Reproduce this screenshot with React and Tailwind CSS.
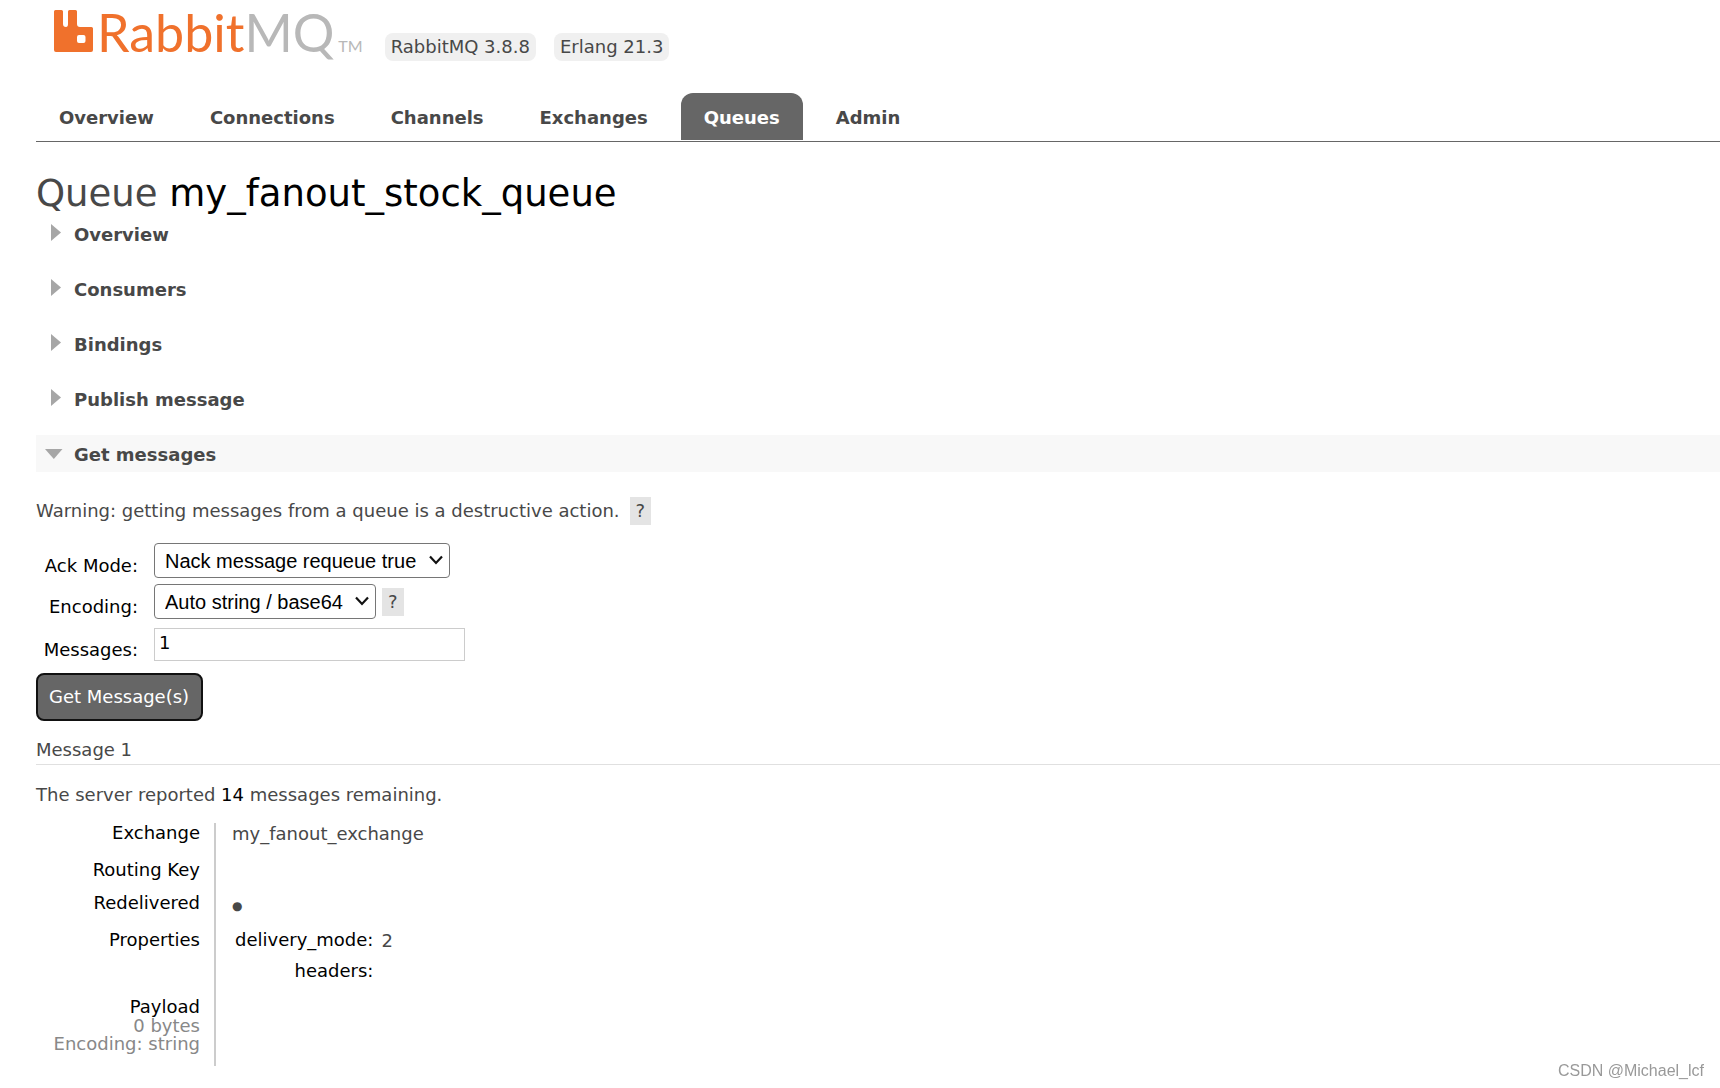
const tabs = ["Overview", "Connections", "Channels", "Exchanges", "Queues", "Admin"];
const closedSections = ["Overview", "Consumers", "Bindings", "Publish message"];

function Logo() {
  return (
    <a href="#/" aria-label="RabbitMQ" className="flex items-end">
      <svg width="39" height="42" viewBox="0 0 39 42" fill="#f0712c" aria-hidden="true">
        <path
          fillRule="evenodd"
          d="M1.5 0H7.5Q9 0 9 1.5V14Q9 17 12 17Q14 17 14 14V1.5Q14 0 15.500 0H21.500Q23 0 23 1.500V14Q23 17 26 17H37.500Q39 17 39 18.500V40Q39 42 37 42H2Q0 42 0 40V1.500Q0 0 1.500 0ZM25 25Q23 25 23 27V31Q23 33 25 33H29.500Q31.500 33 31.500 31V27Q31.500 25 29.500 25Z"
        />
      </svg>
      <span className="ml-1 font-[Lato] text-[52px] leading-[40px] text-[#f0712c]">
        Rabbit<span className="text-[#b8b8b8]">MQ</span>
      </span>
      <span className="ml-1 font-[Lato] text-base leading-3 text-[#b8b8b8]">TM</span>
    </a>
  );
}

function Section({ title, open }) {
  return (
    <h2 className={open ? "bg-[#f8f8f8]" : ""}>
      <button type="button" aria-expanded={!!open} className="flex h-[37px] w-full items-center pl-[9px] font-bold">
        <svg width="18" height="20" viewBox="0 0 18 20" fill="#a6a6a6" aria-hidden="true">
          {open ? <path d="M0 5H17.500L8.800 15Z" /> : <path d="M6 0V17L16 8.500Z" />}
        </svg>
        <span className="pt-0.5 pl-[11px]">{title}</span>
      </button>
    </h2>
  );
}

function Help() {
  return (
    <a href="#help" className="inline-block h-7 bg-[#e4e4e4] px-[6px] leading-7">
      ?
    </a>
  );
}

function Select({ id, value, className }) {
  return (
    <span className="relative inline-block w-fit">
      <select
        id={id}
        defaultValue={value}
        className={"h-[35px] appearance-none rounded-[4px] border border-[#767676] bg-white pl-[10px] font-['Liberation_Sans'] text-[20px] text-black " + className}
      >
        <option>{value}</option>
      </select>
      <svg className="pointer-events-none absolute top-3 right-[7px]" width="14" height="10" viewBox="0 0 14 10" fill="none" stroke="#111" strokeWidth="2.200" aria-hidden="true">
        <path d="M1 1.500L7 8L13 1.500" />
      </svg>
    </span>
  );
}

function Row({ label, children, height, note }) {
  return (
    <tr className={height}>
      <th className="w-[179px] border-r-2 border-[#ccc] pr-[14px] text-right align-top leading-5 font-normal text-black">
        {label}
        {note}
      </th>
      <td className="pl-4 align-top">{children}</td>
    </tr>
  );
}

export default function App() {
  return (
    <div className="min-h-screen bg-white font-['DejaVu_Sans',Verdana,sans-serif] text-[18px] leading-[22px] text-[#484848]">
      <header className="pl-9">
        <div className="flex items-end pt-[10px] pl-[18px]">
          <Logo />
          <ul className="ml-[22px] -mb-[9px] flex gap-[18px]">
            <li className="rounded-lg bg-[#f0f0f0] px-[6px] leading-7">RabbitMQ 3.8.8</li>
            <li className="rounded-lg bg-[#f0f0f0] px-[6px] leading-7">Erlang 21.3</li>
          </ul>
        </div>
        <nav className="mt-[41px] border-b border-[#666] pb-px">
          <ul className="flex gap-[10px]">
            {tabs.map((t) => (
              <li key={t}>
                <a
                  href={"#/" + t.toLowerCase()}
                  className={
                    "block h-[47px] rounded-t-xl px-[23px] pt-[14px] font-bold " +
                    (t === "Queues" ? "bg-[#666] text-white" : "")
                  }
                >
                  {t}
                </a>
              </li>
            ))}
          </ul>
        </nav>
      </header>

      <main className="pl-9">
        <h1 className="pt-[31px] text-[37px] leading-[42px]">
          Queue <b className="font-normal text-black">my_fanout_stock_queue</b>
        </h1>
        <div className="flex flex-col gap-[18px]">
          {closedSections.map((s) => (
            <Section key={s} title={s} />
          ))}
          <Section title="Get messages" open />
        </div>

        <p className="mt-[25px] flex items-center gap-[10px]">
          Warning: getting messages from a queue is a destructive action. <Help />
        </p>

        <form onSubmit={(e) => e.preventDefault()}>
          <div className="mt-[18px] grid grid-cols-[102px_1fr] items-start gap-x-4 gap-y-[6px] text-black">
            <label htmlFor="ack" className="pt-3 text-right">Ack Mode:</label>
            <Select id="ack" value="Nack message requeue true" className="w-[296px]" />
            <label htmlFor="enc" className="pt-3 text-right">Encoding:</label>
            <div className="flex items-center gap-[6px] text-[#484848]">
              <Select id="enc" value="Auto string / base64" className="w-[222px]" />
              <Help />
            </div>
            <label htmlFor="num" className="pt-[14px] text-right">Messages:</label>
            <input id="num" type="text" defaultValue="1" className="mt-[3px] h-[33px] w-[311px] border border-[#ccc] px-1 pb-1" />
          </div>
          <button type="submit" className="mt-3 h-12 rounded-lg border-2 border-[#111] bg-[#666] pr-3 pl-[11px] text-white">
            Get Message(s)
          </button>
        </form>

        <h3 className="mt-[18px] border-b border-[#e0e0e0] pb-[3px]">Message 1</h3>
        <p className="mt-[19px]">
          The server reported <b className="font-normal text-black">14</b> messages remaining.
        </p>

        <table className="mt-[17px] border-collapse">
          <tbody>
            <Row label="Exchange" height="h-[37px]">my_fanout_exchange</Row>
            <Row label="Routing Key" height="h-[33px]" />
            <Row label="Redelivered" height="h-[37px]">
              <span className="text-[12px]">●</span>
            </Row>
            <Row label="Properties" height="h-[67px]">
              <table className="border-collapse">
                <tbody>
                  <tr className="h-[31px] align-top">
                    <th className="pl-[3px] text-right leading-5 font-normal text-black">delivery_mode:</th>
                    <td className="pl-2">2</td>
                  </tr>
                  <tr>
                    <th className="text-right leading-5 font-normal text-black">headers:</th>
                    <td />
                  </tr>
                </tbody>
              </table>
            </Row>
            <Row
              label="Payload"
              height="h-[69px]"
              note={
                <span className="block leading-[18px] text-[#888]">
                  0 bytes
                  <br />
                  Encoding: string
                </span>
              }
            />
          </tbody>
        </table>
      </main>

      <footer className="fixed right-4 bottom-[5px] font-['Liberation_Sans'] text-base text-[#999]">CSDN @Michael_lcf</footer>
    </div>
  );
}
